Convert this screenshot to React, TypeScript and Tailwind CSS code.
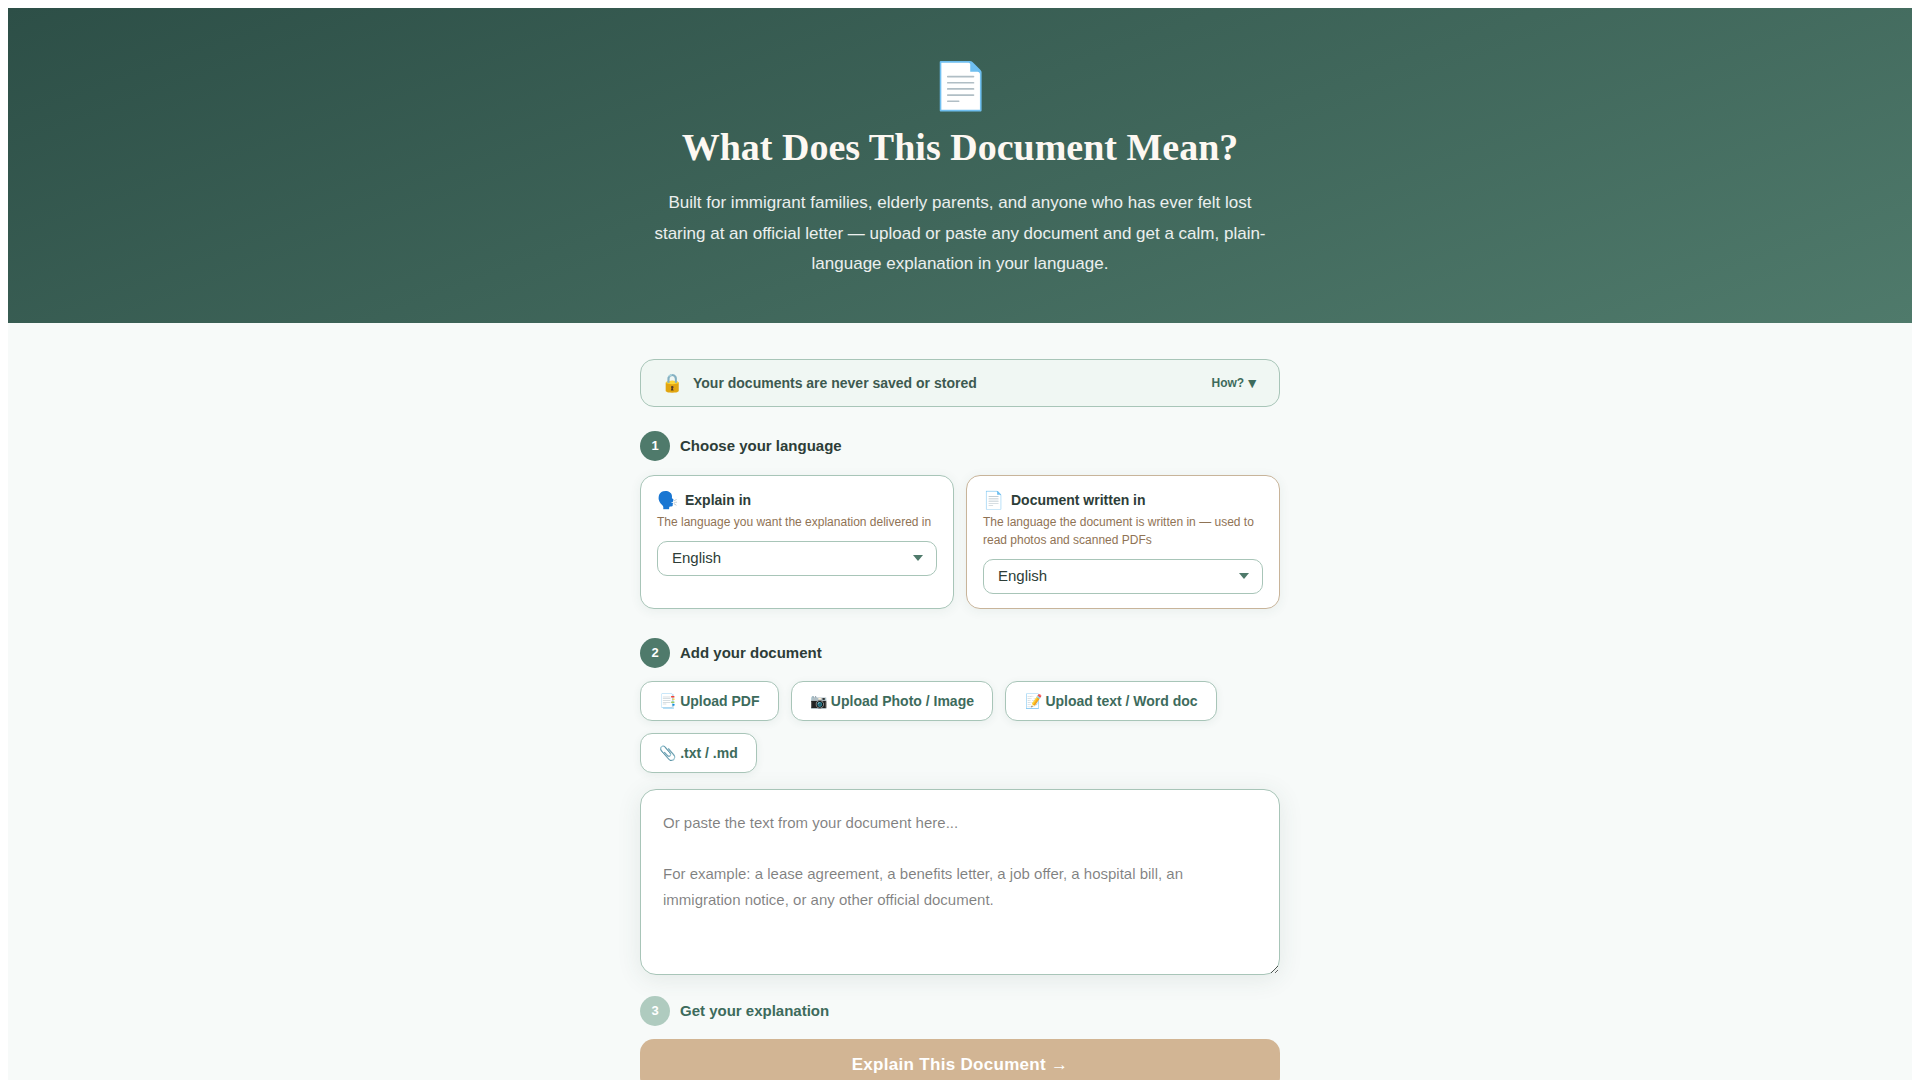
import * as React from 'react';

function Step({ n, label, dim }: { n: number; label: string; dim?: boolean }) {
  return (
    <div className="flex items-center gap-[10px]">
      <div
        className={[
          'flex h-[30px] w-[30px] shrink-0 items-center justify-center rounded-full text-[13px] font-bold text-white',
          dim ? 'bg-[#afcbbf]' : 'bg-[#4f7a6b]',
        ].join(' ')}
      >
        {n}
      </div>
      <span className={['text-[15px] font-bold', dim ? 'text-[#3d6b5c]' : 'text-[#2d3d38]'].join(' ')}>{label}</span>
    </div>
  );
}

function LangCard({ icon, title, hint, warm }: { icon: string; title: string; hint: string; warm?: boolean }) {
  return (
    <div
      className={[
        'rounded-[14px] border-[1.5px] bg-white px-4 pb-[14px] pt-[14px] shadow-[0_2px_12px_rgba(45,79,71,0.07)]',
        warm ? 'border-[#c8b49a]' : 'border-[#a8c5b8]',
      ].join(' ')}
    >
      <div className="flex items-center gap-[7px] text-[14px] font-bold text-[#2d3d38]">
        <span className="text-[17px] leading-[20px]">{icon}</span>
        {title}
      </div>
      <p className="mt-[2px] text-[12px] leading-[18px] text-[#8f7355]">{hint}</p>
      <div className="relative mt-[10px]">
        <select className="h-[35px] w-full appearance-none rounded-[10px] border-[1.5px] border-[#a8c5b8] bg-white pl-[14px] pr-8 text-[15px] text-[#2d3d38] outline-none">
          <option>English</option>
        </select>
        <svg className="pointer-events-none absolute right-[14px] top-[14px]" width="10" height="6" viewBox="0 0 10 6">
          <path d="M0 0h10L5 6z" fill="#4f7a6b" />
        </svg>
      </div>
    </div>
  );
}

function UploadButton({ label }: { label: string }) {
  return (
    <button
      type="button"
      className="h-[40px] rounded-[12px] border-[1.5px] border-[#a8c5b8] bg-white px-[18.25px] text-[14px] font-bold text-[#3d6b5c] shadow-[0_2px_8px_rgba(45,79,71,0.07)]"
    >
      {label}
    </button>
  );
}

export default function App() {
  return (
    <div className="h-screen overflow-hidden bg-white p-2 font-['Liberation_Sans',sans-serif]">
      <div className="min-h-full bg-[#f7faf9]">
        {/* Hero */}
        <header className="flex h-[315px] flex-col items-center bg-[linear-gradient(160deg,#2d4f47_0%,#4f7a6b_100%)] pt-[44px] text-center">
          <div className="text-[46px] leading-[68px]">📄</div>
          <h1 className="mt-[3px] font-['Liberation_Serif',serif] text-[38px] font-bold leading-[48px] text-[#fdf8f2]">
            What Does This Document Mean?
          </h1>
          <p className="mt-[17px] max-w-[620px] text-[17px] leading-[30.6px] text-white/90">
            Built for immigrant families, elderly parents, and anyone who has ever felt lost staring at an official
            letter — upload or paste any document and get a calm, plain-language explanation in your language.
          </p>
        </header>

        <main className="mx-auto w-[640px] pt-[36px]">
          {/* Privacy note */}
          <div className="flex h-[48px] items-center justify-between rounded-[14px] border-[1.5px] border-[#a8c5b8] bg-[#f0f7f3] px-5">
            <div className="flex items-center gap-[10px] text-[14px] font-bold text-[#3d5a50]">
              <span className="text-[18px]">🔒</span>
              Your documents are never saved or stored
            </div>
            <span className="flex items-center gap-[1px] text-[12px] font-bold text-[#3d6b5c]">
              How? <span className="text-[14px] leading-[14px]">▼</span>
            </span>
          </div>

          <div className="mt-6">
            <Step n={1} label="Choose your language" />
          </div>
          <div className="mt-[14px] grid grid-cols-2 gap-3">
            <LangCard icon="🗣️" title="Explain in" hint="The language you want the explanation delivered in" />
            <LangCard
              warm
              icon="📄"
              title="Document written in"
              hint="The language the document is written in — used to read photos and scanned PDFs"
            />
          </div>

          <div className="mt-[29px]">
            <Step n={2} label="Add your document" />
          </div>
          <div className="mt-[13px] flex flex-wrap gap-x-3 gap-y-[12px]">
            <UploadButton label="📑 Upload PDF" />
            <UploadButton label="📷 Upload Photo / Image" />
            <UploadButton label="📝 Upload text / Word doc" />
            <UploadButton label="📎 .txt / .md" />
          </div>

          <textarea
            className="mt-[16px] block h-[186px] w-full rounded-[16px] border-[1.5px] border-[#a8c5b8] bg-white px-[22px] py-[20px] text-[15px] leading-[25.5px] shadow-[0_4px_24px_rgba(45,79,71,0.1)] outline-none"
            placeholder={
              'Or paste the text from your document here...\n\nFor example: a lease agreement, a benefits letter, a job offer, a hospital bill, an immigration notice, or any other official document.'
            }
          />

          <div className="mt-[21px]">
            <Step n={3} label="Get your explanation" dim />
          </div>
          <button
            type="button"
            className="mt-[13px] h-[52px] w-full rounded-[14px] bg-[#d2b594] text-[17px] font-bold tracking-[0.3px] text-white"
          >
            Explain This Document →
          </button>
        </main>
      </div>
    </div>
  );
}
